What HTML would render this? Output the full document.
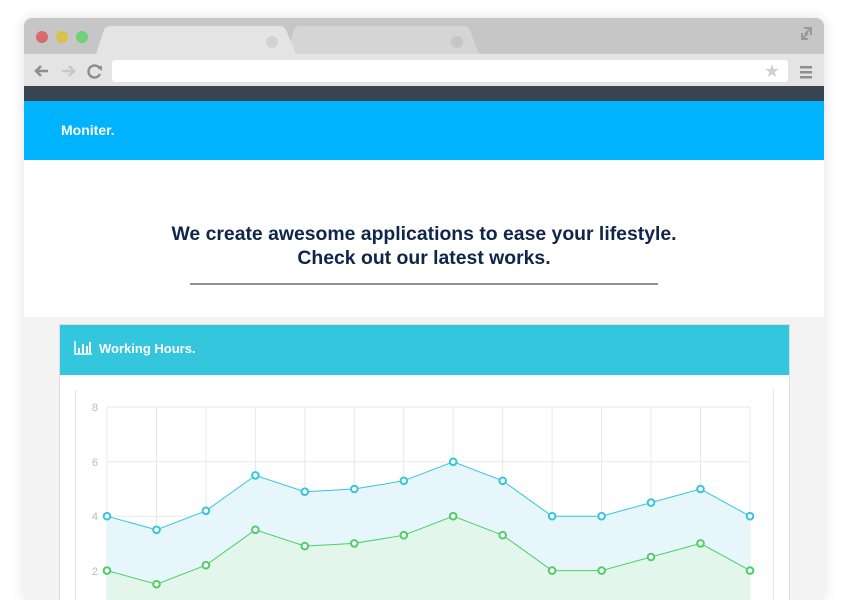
<!DOCTYPE html>
<html><head><meta charset="utf-8"><style>
*{margin:0;padding:0;box-sizing:border-box}
html,body{width:848px;height:600px;overflow:hidden}
body{background:#fff;font-family:"Liberation Sans",sans-serif;position:relative}
.frame{position:absolute;left:24px;top:18px;width:800px;height:582px;border-radius:8px 8px 0 0;overflow:hidden;box-shadow:0 0 14px rgba(0,0,0,.12)}
.tabs{position:absolute;left:0;top:0;width:800px;height:36px;background:#c6c6c6}
.dot{position:absolute;top:13px;width:12px;height:12px;border-radius:50%}
.tb{position:absolute;left:0;top:36px;width:800px;height:32px;background:#e4e4e4}
.url{position:absolute;left:88px;top:6px;width:676px;height:22px;background:#fff;border-radius:3px}
.dark{position:absolute;left:0;top:68px;width:800px;height:15px;background:#394452}
.blue{position:absolute;left:0;top:83px;width:800px;height:59px;background:#00b3fe;color:#fff;font-weight:bold;font-size:14px;padding:21px 0 0 37px}
.white{position:absolute;left:0;top:142px;width:800px;height:157px;background:#fff;text-align:center;color:#10254a;font-weight:bold;font-size:19.4px;line-height:24px;padding-top:62px}
.hr{position:absolute;left:166px;top:123px;width:468px;height:2px;background:#8e9199}
.pat{position:absolute;left:0;top:299px;width:800px;height:300px;background:#f3f3f3}
.panel{position:absolute;left:35px;top:306px;width:731px;height:300px;background:#fff;border:1px solid #ddd}
.ph{height:50px;background:#33c6dd;color:#fff;font-weight:bold;font-size:13px;padding:16px 0 0 39px;position:relative}
</style></head><body>
<div class="frame">
 <div class="tabs">
  <div class="dot" style="left:12px;background:#d66b6b"></div>
  <div class="dot" style="left:32px;background:#d9c24a"></div>
  <div class="dot" style="left:52px;background:#72cf7a"></div>
  <svg width="800" height="36" style="position:absolute;left:0;top:0">
   <path d="M262 36 L270 12 Q272 8 276 8 L440 8 Q444 8 446 12 L455 36Z" fill="#d5d5d5"/>
   <path d="M72 36 L80 12 Q82 8 86 8 L256 8 Q260 8 262 12 L272 36Z" fill="#e4e4e4"/>
   <circle cx="248" cy="24" r="6" fill="#d2d2d2"/><circle cx="433" cy="24" r="6" fill="#c6c6c6"/>
   <path d="M780 10 L787 10 L787 17 M787 10 L781 16 M778 15 L778 21 L784 21 M778 21 L784 15" stroke="#999" stroke-width="2" fill="none"/>
  </svg>
 </div>
 <div class="tb">
  <svg width="800" height="32" style="position:absolute;left:0;top:0">
   <path d="M24 17 L12 17 M17 12 L12 17 L17 22" stroke="#8e8e8e" stroke-width="2.5" fill="none"/>
   <path d="M38 17 L50 17 M45 12 L50 17 L45 22" stroke="#c8c8c8" stroke-width="2.5" fill="none"/>
   <path d="M76 15 A6 6 0 1 0 76 20" stroke="#8e8e8e" stroke-width="2.5" fill="none"/><path d="M72 12 L78 12 L78 17Z" fill="#8e8e8e"/>
   <rect x="776" y="12" width="12" height="2.5" fill="#8e8e8e"/><rect x="776" y="17" width="12" height="2.5" fill="#8e8e8e"/><rect x="776" y="22" width="12" height="2.5" fill="#8e8e8e"/>
  </svg>
  <div class="url"><span style="position:absolute;right:8px;top:0;color:#d0d0d0;font-size:18px;line-height:22px">★</span></div>
 </div>
 <div class="dark"></div>
 <div class="blue">Moniter.</div>
 <div class="white">We create awesome applications to ease your lifestyle.<br>Check out our latest works.<div class="hr"></div></div>
 <div class="pat"></div>
 <div class="panel">
  <div class="ph"><svg width="18" height="14" style="position:absolute;left:14px;top:16px"><path d="M1 0V13H18" stroke="#fff" stroke-width="1.5" fill="none"/><rect x="4" y="7" width="2" height="5" fill="#fff"/><rect x="8" y="3" width="2" height="9" fill="#fff"/><rect x="12" y="5" width="2" height="7" fill="#fff"/><rect x="15" y="1" width="2" height="11" fill="#fff"/></svg>Working Hours.</div>
 </div>
</div>
<svg width="848" height="600" style="position:absolute;left:0;top:0">
 <line x1="75.5" y1="390" x2="75.5" y2="600" stroke="#e6e6e6"/>
 <line x1="773.5" y1="389" x2="773.5" y2="600" stroke="#e6e6e6"/>
 <g stroke="#e8e8e8" stroke-width="1">
  <line x1="107" y1="407" x2="750" y2="407"/><line x1="107" y1="461.8" x2="750" y2="461.8"/><line x1="107" y1="516.2" x2="750" y2="516.2"/><line x1="107" y1="570.6" x2="750" y2="570.6"/>
  <line x1="107" y1="407" x2="107" y2="600"/><line x1="156.5" y1="407" x2="156.5" y2="600"/><line x1="205.9" y1="407" x2="205.9" y2="600"/><line x1="255.4" y1="407" x2="255.4" y2="600"/><line x1="304.8" y1="407" x2="304.8" y2="600"/><line x1="354.3" y1="407" x2="354.3" y2="600"/><line x1="403.8" y1="407" x2="403.8" y2="600"/><line x1="453.2" y1="407" x2="453.2" y2="600"/><line x1="502.7" y1="407" x2="502.7" y2="600"/><line x1="552.1" y1="407" x2="552.1" y2="600"/><line x1="601.6" y1="407" x2="601.6" y2="600"/><line x1="651" y1="407" x2="651" y2="600"/><line x1="700.5" y1="407" x2="700.5" y2="600"/><line x1="750" y1="407" x2="750" y2="600"/>
 </g>
 <g fill="#bbb" font-size="11" font-family="Liberation Sans" text-anchor="end"><text x="98" y="411">8</text><text x="98" y="466">6</text><text x="98" y="520">4</text><text x="98" y="575">2</text></g>
 <polygon fill="#e6f6fb" points="107,516.2 156.5,529.8 205.9,510.8 255.4,475.4 304.8,491.7 354.3,489 403.8,480.8 453.2,461.8 502.7,480.8 552.1,516.2 601.6,516.2 651,502.6 700.5,489 750,516.2 750,600 107,600"/>
 <polygon fill="#e2f6ec" points="107,570.6 156.5,584.2 205.9,565.2 255.4,529.8 304.8,546.1 354.3,543.4 403.8,535.2 453.2,516.2 502.7,535.2 552.1,570.6 601.6,570.6 651,557 700.5,543.4 750,570.6 750,600 107,600"/>
 <g fill="#fff" stroke-width="2">
 <polyline fill="none" stroke="#33c6dd" stroke-width="1" points="107,516.2 156.5,529.8 205.9,510.8 255.4,475.4 304.8,491.7 354.3,489 403.8,480.8 453.2,461.8 502.7,480.8 552.1,516.2 601.6,516.2 651,502.6 700.5,489 750,516.2"/>
 <polyline fill="none" stroke="#4ccf65" stroke-width="1" points="107,570.6 156.5,584.2 205.9,565.2 255.4,529.8 304.8,546.1 354.3,543.4 403.8,535.2 453.2,516.2 502.7,535.2 552.1,570.6 601.6,570.6 651,557 700.5,543.4 750,570.6"/>
 <g stroke="#33c6dd"><circle cx="107" cy="516.2" r="3.3"/><circle cx="156.5" cy="529.8" r="3.3"/><circle cx="205.9" cy="510.8" r="3.3"/><circle cx="255.4" cy="475.4" r="3.3"/><circle cx="304.8" cy="491.7" r="3.3"/><circle cx="354.3" cy="489" r="3.3"/><circle cx="403.8" cy="480.8" r="3.3"/><circle cx="453.2" cy="461.8" r="3.3"/><circle cx="502.7" cy="480.8" r="3.3"/><circle cx="552.1" cy="516.2" r="3.3"/><circle cx="601.6" cy="516.2" r="3.3"/><circle cx="651" cy="502.6" r="3.3"/><circle cx="700.5" cy="489" r="3.3"/><circle cx="750" cy="516.2" r="3.3"/></g>
 <g stroke="#4ccf65"><circle cx="107" cy="570.6" r="3.3"/><circle cx="156.5" cy="584.2" r="3.3"/><circle cx="205.9" cy="565.2" r="3.3"/><circle cx="255.4" cy="529.8" r="3.3"/><circle cx="304.8" cy="546.1" r="3.3"/><circle cx="354.3" cy="543.4" r="3.3"/><circle cx="403.8" cy="535.2" r="3.3"/><circle cx="453.2" cy="516.2" r="3.3"/><circle cx="502.7" cy="535.2" r="3.3"/><circle cx="552.1" cy="570.6" r="3.3"/><circle cx="601.6" cy="570.6" r="3.3"/><circle cx="651" cy="557" r="3.3"/><circle cx="700.5" cy="543.4" r="3.3"/><circle cx="750" cy="570.6" r="3.3"/></g>
 </g>
</svg>
</body></html>
